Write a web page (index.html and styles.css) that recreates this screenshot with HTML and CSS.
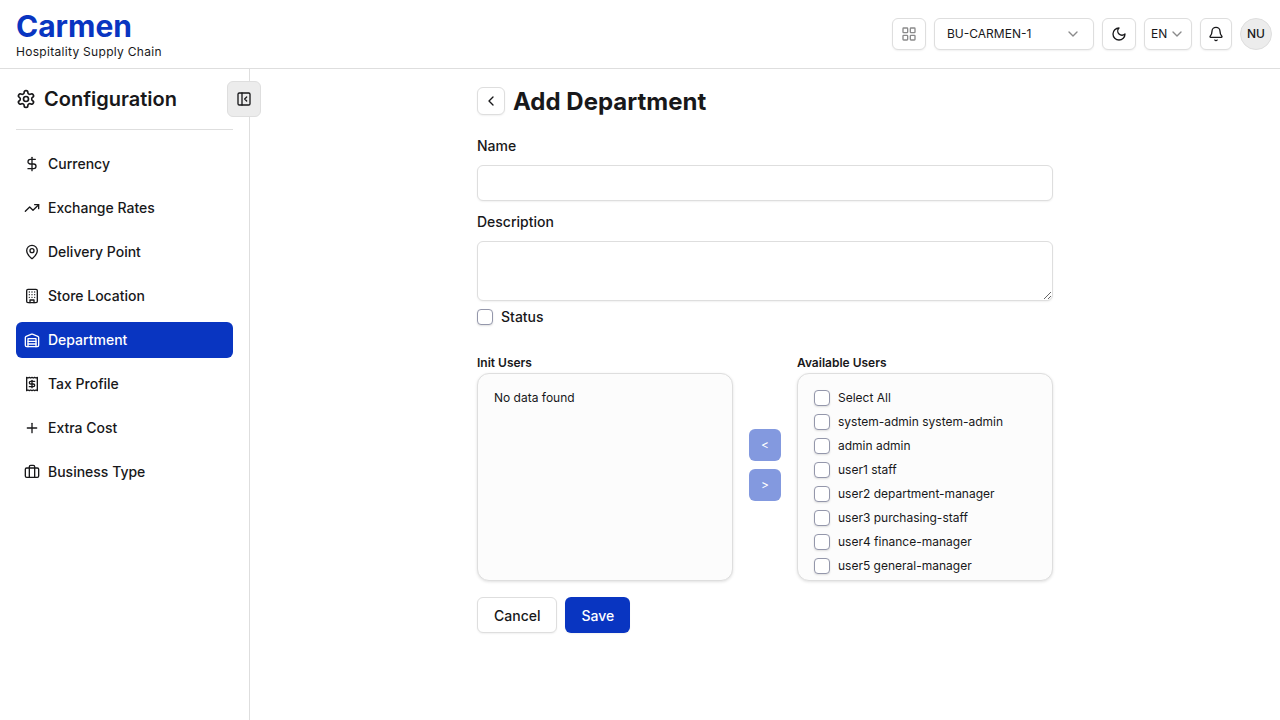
FILE: index.html
```html
<!DOCTYPE html>
<html lang="en">
<head>
<meta charset="utf-8">
<meta name="viewport" content="width=device-width, initial-scale=1">
<title>Carmen - Add Department</title>
<link rel="stylesheet" href="styles.css">
</head>
<body>
<header class="topbar">
  <div class="brand">
    <div class="brand-name">Carmen</div>
    <div class="brand-tagline">Hospitality Supply Chain</div>
  </div>
  <div class="toolbar">
    <button class="tool tool-muted" type="button" aria-label="Modules">
      <svg class="icon" viewBox="0 0 24 24"><rect x="3" y="3" width="7" height="7" rx="1"/><rect x="14" y="3" width="7" height="7" rx="1"/><rect x="14" y="14" width="7" height="7" rx="1"/><rect x="3" y="14" width="7" height="7" rx="1"/></svg>
    </button>
    <div class="picker picker-unit">
      <select aria-label="Business unit"><option>BU-CARMEN-1</option></select>
      <svg class="icon picker-arrow" viewBox="0 0 24 24"><path d="m6 9 6 6 6-6"/></svg>
    </div>
    <button class="tool" type="button" aria-label="Dark mode">
      <svg class="icon" viewBox="0 0 24 24"><path d="M12 3a6 6 0 0 0 9 9 9 9 0 1 1-9-9Z"/></svg>
    </button>
    <div class="picker picker-lang">
      <select aria-label="Language"><option>EN</option></select>
      <svg class="icon picker-arrow" viewBox="0 0 24 24"><path d="m6 9 6 6 6-6"/></svg>
    </div>
    <button class="tool tool-square" type="button" aria-label="Notifications">
      <svg class="icon" viewBox="0 0 24 24"><path d="M10.268 21a2 2 0 0 0 3.464 0"/><path d="M3.262 15.326A1 1 0 0 0 4 17h16a1 1 0 0 0 .74-1.673C19.41 13.956 18 12.499 18 8A6 6 0 0 0 6 8c0 4.499-1.411 5.956-2.738 7.326"/></svg>
    </button>
    <button class="avatar" type="button">NU</button>
  </div>
</header>
<div class="shell">
  <aside class="sidebar">
    <h2 class="sidebar-title">
      <svg class="icon icon-lg" viewBox="0 0 24 24"><path d="M12.22 2h-.44a2 2 0 0 0-2 2v.18a2 2 0 0 1-1 1.73l-.43.25a2 2 0 0 1-2 0l-.15-.08a2 2 0 0 0-2.73.73l-.22.38a2 2 0 0 0 .73 2.73l.15.1a2 2 0 0 1 1 1.72v.51a2 2 0 0 1-1 1.74l-.15.09a2 2 0 0 0-.73 2.73l.22.38a2 2 0 0 0 2.73.73l.15-.08a2 2 0 0 1 2 0l.43.25a2 2 0 0 1 1 1.73V20a2 2 0 0 0 2 2h.44a2 2 0 0 0 2-2v-.18a2 2 0 0 1 1-1.73l.43-.25a2 2 0 0 1 2 0l.15.08a2 2 0 0 0 2.73-.73l.22-.39a2 2 0 0 0-.73-2.73l-.15-.08a2 2 0 0 1-1-1.74v-.5a2 2 0 0 1 1-1.74l.15-.09a2 2 0 0 0 .73-2.73l-.22-.38a2 2 0 0 0-2.73-.73l-.15.08a2 2 0 0 1-2 0l-.43-.25a2 2 0 0 1-1-1.73V4a2 2 0 0 0-2-2z"/><circle cx="12" cy="12" r="3"/></svg>
      Configuration
    </h2>
    <button class="collapse" type="button" aria-label="Collapse sidebar">
      <svg class="icon" viewBox="0 0 24 24"><rect width="18" height="18" x="3" y="3" rx="2"/><path d="M9 3v18"/><path d="m16 15-3-3 3-3"/></svg>
    </button>
    <nav class="menu">
      <a class="menu-item" href="#"><svg class="icon" viewBox="0 0 24 24"><path d="M12 2v20"/><path d="M17 5H9.500a3.500 3.500 0 0 0 0 7h5a3.500 3.500 0 0 1 0 7H6"/></svg>Currency</a>
      <a class="menu-item" href="#"><svg class="icon" viewBox="0 0 24 24"><path d="M22 7 13.500 15.500 8.500 10.500 2 17"/><path d="M16 7h6v6"/></svg>Exchange Rates</a>
      <a class="menu-item" href="#"><svg class="icon" viewBox="0 0 24 24"><path d="M20 10c0 4.993-5.539 10.193-7.399 11.799a1 1 0 0 1-1.202 0C9.539 20.193 4 14.993 4 10a8 8 0 0 1 16 0"/><circle cx="12" cy="10" r="3"/></svg>Delivery Point</a>
      <a class="menu-item" href="#"><svg class="icon" viewBox="0 0 24 24"><rect width="16" height="20" x="4" y="2" rx="2"/><path d="M9 22v-4h6v4"/><path d="M8 6h.01"/><path d="M16 6h.01"/><path d="M12 6h.01"/><path d="M12 10h.01"/><path d="M12 14h.01"/><path d="M16 10h.01"/><path d="M16 14h.01"/><path d="M8 10h.01"/><path d="M8 14h.01"/></svg>Store Location</a>
      <a class="menu-item menu-item-active" href="#" aria-current="page"><svg class="icon" viewBox="0 0 24 24"><path d="M22 8.350V20a2 2 0 0 1-2 2H4a2 2 0 0 1-2-2V8.350A2 2 0 0 1 3.260 6.500l8-3.200a2 2 0 0 1 1.480 0l8 3.200A2 2 0 0 1 22 8.350Z"/><path d="M6 18h12"/><path d="M6 14h12"/><path d="M6 22V10h12v12"/></svg>Department</a>
      <a class="menu-item" href="#"><svg class="icon" viewBox="0 0 24 24"><path d="M4 2v20l2-1 2 1 2-1 2 1 2-1 2 1 2-1 2 1V2l-2 1-2-1-2 1-2-1-2 1-2-1-2 1Z"/><path d="M16 8h-6a2 2 0 1 0 0 4h4a2 2 0 1 1 0 4H8"/><path d="M12 17.500v-11"/></svg>Tax Profile</a>
      <a class="menu-item" href="#"><svg class="icon" viewBox="0 0 24 24"><path d="M5 12h14"/><path d="M12 5v14"/></svg>Extra Cost</a>
      <a class="menu-item" href="#"><svg class="icon" viewBox="0 0 24 24"><rect width="20" height="14" x="2" y="6" rx="2"/><path d="M8 20V4a2 2 0 0 1 2-2h4a2 2 0 0 1 2 2v16"/></svg>Business Type</a>
    </nav>
  </aside>
  <main class="content">
    <form class="form">
      <div class="form-head">
        <button class="back" type="button" aria-label="Back"><svg class="icon" viewBox="0 0 24 24"><path d="m15 18-6-6 6-6"/></svg></button>
        <h1 class="form-title">Add Department</h1>
      </div>
      <div class="field">
        <label class="label" for="name">Name</label>
        <input class="input" id="name" type="text">
      </div>
      <div class="field">
        <label class="label" for="description">Description</label>
        <textarea class="input textarea" id="description"></textarea>
      </div>
      <div class="status">
        <input class="check" id="status" type="checkbox">
        <label class="label" for="status">Status</label>
      </div>
      <div class="transfer">
        <section class="transfer-side">
          <h3 class="transfer-title">Init Users</h3>
          <div class="panel"><p class="empty">No data found</p></div>
        </section>
        <div class="transfer-actions">
          <button class="move" type="button" disabled>&lt;</button>
          <button class="move" type="button" disabled>&gt;</button>
        </div>
        <section class="transfer-side">
          <h3 class="transfer-title">Available Users</h3>
          <div class="panel">
            <label class="user"><input class="check" type="checkbox">Select All</label>
            <label class="user"><input class="check" type="checkbox">system-admin system-admin</label>
            <label class="user"><input class="check" type="checkbox">admin admin</label>
            <label class="user"><input class="check" type="checkbox">user1 staff</label>
            <label class="user"><input class="check" type="checkbox">user2 department-manager</label>
            <label class="user"><input class="check" type="checkbox">user3 purchasing-staff</label>
            <label class="user"><input class="check" type="checkbox">user4 finance-manager</label>
            <label class="user"><input class="check" type="checkbox">user5 general-manager</label>
          </div>
        </section>
      </div>
      <div class="actions">
        <button class="btn" type="button">Cancel</button>
        <button class="btn btn-primary" type="submit">Save</button>
      </div>
    </form>
  </main>
</div>
</body>
</html>
```

FILE: styles.css
```css
:root {
  --ink: #18181a;
  --line: #dedede;
  --primary: #0935c1;
  --shadow: 0 1px 2px rgba(0, 0, 0, 0.06);
}

* { box-sizing: border-box; }

body {
  margin: 0;
  min-height: 100vh;
  display: flex;
  flex-direction: column;
  font-family: Inter, "Liberation Sans", sans-serif;
  font-size: 14px;
  line-height: 20px;
  color: var(--ink);
  background: #fff;
}

h1, h2, h3, p { margin: 0; }

button, input, select, textarea { font: inherit; color: inherit; }

button { padding: 0; cursor: pointer; }

.icon {
  width: 16px;
  height: 16px;
  flex: none;
  fill: none;
  stroke: currentColor;
  stroke-width: 2;
  stroke-linecap: round;
  stroke-linejoin: round;
}

.icon-lg { width: 20px; height: 20px; }

/* Top bar */
.topbar {
  display: flex;
  align-items: center;
  justify-content: space-between;
  padding: 8px 8px 8px 16px;
  border-bottom: 1px solid var(--line);
}

.brand-name {
  font-size: 30px;
  line-height: 36px;
  font-weight: 700;
  color: var(--primary);
}

.brand-tagline {
  font-size: 12px;
  line-height: 16px;
  letter-spacing: 0.025em;
}

.toolbar { display: flex; align-items: center; gap: 8px; }

.tool, .picker select, .back, .btn {
  border: 1px solid var(--line);
  border-radius: 6px;
  background: #fff;
  box-shadow: var(--shadow);
}

.tool {
  display: grid;
  place-items: center;
  width: 34px;
  height: 32px;
}

.tool-square { width: 32px; }

.tool-muted .icon { opacity: 0.5; }

.picker { position: relative; }

.picker select {
  appearance: none;
  width: 100%;
  height: 32px;
  padding: 0 12px;
  font-size: 12px;
}

.picker-unit { width: 160px; }
.picker-lang { width: 48px; }
.picker-lang select { padding: 0 6px; }

.picker-arrow {
  position: absolute;
  top: 8px;
  right: 13px;
  opacity: 0.5;
  pointer-events: none;
}

.picker-lang .picker-arrow { right: 7px; }

.avatar {
  width: 32px;
  height: 32px;
  border: 1px solid var(--line);
  border-radius: 50%;
  background: #ececec;
  font-size: 12px;
  font-weight: 500;
}

/* Sidebar */
.shell { flex: 1; display: flex; }

.sidebar {
  position: relative;
  flex: none;
  width: 250px;
  padding: 16px;
  border-right: 1px solid var(--line);
}

.sidebar-title {
  display: flex;
  align-items: center;
  gap: 8px;
  padding-bottom: 16px;
  border-bottom: 1px solid var(--line);
  font-size: 20px;
  line-height: 28px;
  font-weight: 600;
}

.collapse {
  position: absolute;
  top: 12px;
  right: -12px;
  display: grid;
  place-items: center;
  width: 34px;
  height: 36px;
  border: 1px solid var(--line);
  border-radius: 6px;
  background: #ececec;
}

.menu {
  display: flex;
  flex-direction: column;
  gap: 8px;
  padding-top: 16px;
}

.menu-item {
  display: flex;
  align-items: center;
  gap: 8px;
  padding: 8px;
  border-radius: 6px;
  font-weight: 500;
  color: inherit;
  text-decoration: none;
}

.menu-item-active { background: var(--primary); color: #fff; }

/* Form */
.content { flex: 1; padding: 16px; }

.form {
  display: flex;
  flex-direction: column;
  max-width: 576px;
  margin: 0 auto;
}

.form-head {
  display: flex;
  align-items: center;
  gap: 8px;
  margin-bottom: 20px;
}

.back {
  display: grid;
  place-items: center;
  width: 28px;
  height: 28px;
}

.form-title { padding-top: 2px; font-size: 24px; line-height: 30px; font-weight: 700; }

.field {
  display: flex;
  flex-direction: column;
  gap: 10px;
  margin-bottom: 12px;
}

.label { font-weight: 500; }

.field .label { line-height: 18px; }

.input {
  width: 100%;
  height: 36px;
  padding: 4px 12px;
  border: 1px solid var(--line);
  border-radius: 6px;
  background: #fff;
  box-shadow: var(--shadow);
}

.textarea { height: 60px; min-height: 60px; padding: 8px 12px; resize: vertical; }

.check {
  appearance: none;
  flex: none;
  width: 16px;
  height: 16px;
  margin: 0;
  border: 1px solid #9497ab;
  border-radius: 4px;
  background: #fff;
  box-shadow: 0 1px 2px rgba(0, 0, 0, 0.12);
}

.check:checked { background: var(--primary); border-color: var(--primary); }

.status {
  display: flex;
  align-items: center;
  gap: 8px;
  margin-top: -6px;
}

.transfer {
  display: grid;
  grid-template-columns: 1fr 32px 1fr;
  gap: 16px;
  margin-top: 22px;
}

.transfer-title {
  padding: 6px 0 2px;
  font-size: 12px;
  line-height: 16px;
  font-weight: 600;
}

.transfer-actions {
  display: flex;
  flex-direction: column;
  justify-content: center;
  gap: 8px;
}

.move {
  width: 32px;
  height: 32px;
  border: 0;
  border-radius: 6px;
  background: var(--primary);
  color: #fff;
  font-size: 12px;
  opacity: 0.5;
}

.panel {
  height: 208px;
  padding: 16px;
  overflow: hidden;
  border: 1px solid var(--line);
  border-radius: 12px;
  background: #fcfcfc;
  box-shadow: 0 1px 3px rgba(0, 0, 0, 0.12);
  font-size: 12px;
  line-height: 16px;
}

.user {
  display: flex;
  align-items: center;
  gap: 8px;
  margin-bottom: 8px;
}

.actions { display: flex; gap: 8px; margin-top: 16px; }

.btn {
  height: 36px;
  padding: 2px 16px 0;
  font-weight: 500;
}

.btn-primary { border: 0; background: var(--primary); color: #fff; }
```
